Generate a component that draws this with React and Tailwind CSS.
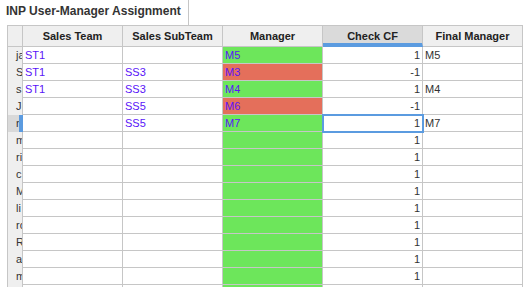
import React from 'react'

// Sheet rows: row-header label (clipped by the narrow frozen column), team, subteam, manager, ok flag, check value, final
const rows = [
  { label: 'ja', team: 'ST1', sub: '', mgr: 'M5', ok: true, check: '1', final: 'M5' },
  { label: 'S', team: 'ST1', sub: 'SS3', mgr: 'M3', ok: false, check: '-1', final: '' },
  { label: 's', team: 'ST1', sub: 'SS3', mgr: 'M4', ok: true, check: '1', final: 'M4' },
  { label: 'J', team: '', sub: 'SS5', mgr: 'M6', ok: false, check: '-1', final: '' },
  { label: 'n', team: '', sub: 'SS5', mgr: 'M7', ok: true, check: '1', final: 'M7', selected: true },
  { label: 'm', team: '', sub: '', mgr: '', ok: true, check: '1', final: '' },
  { label: 'ri', team: '', sub: '', mgr: '', ok: true, check: '1', final: '' },
  { label: 'c', team: '', sub: '', mgr: '', ok: true, check: '1', final: '' },
  { label: 'M', team: '', sub: '', mgr: '', ok: true, check: '1', final: '' },
  { label: 'li', team: '', sub: '', mgr: '', ok: true, check: '1', final: '' },
  { label: 'ro', team: '', sub: '', mgr: '', ok: true, check: '1', final: '' },
  { label: 'R', team: '', sub: '', mgr: '', ok: true, check: '1', final: '' },
  { label: 'a', team: '', sub: '', mgr: '', ok: true, check: '1', final: '' },
  { label: 'm', team: '', sub: '', mgr: '', ok: true, check: '1', final: '' },
  { label: '', team: '', sub: '', mgr: '', ok: true, check: '', final: '' },
]

const cell = 'w-[100px] h-[17px] shrink-0 border-r border-b border-[#c6c6c6] px-[2px] leading-[16px] overflow-hidden whitespace-nowrap'
const head = 'w-[100px] h-[21px] shrink-0 border-r border-[#c6c6c6] flex items-center justify-center font-bold text-[#222]'

export default function App() {
  return (
    <div className="w-[530px] h-[287px] overflow-hidden bg-white text-[11px] font-['Liberation_Sans',Arial,sans-serif]">
      {/* sheet tab title */}
      <div className="w-[189px] h-[25px] border-r border-[#c6c6c6] pl-[6px] pt-[3px] text-[12px] font-bold text-[#333] leading-[16px]">
        INP User-Manager Assignment
      </div>

      <div className="ml-[7px] w-[516px] border-l border-t border-[#c6c6c6]">
        {/* header row */}
        <div className="flex h-[21px] bg-[#efefef]">
          <div className="w-[15px] shrink-0 border-r border-b border-[#c6c6c6]" />
          <div className={`${head} border-b`}>Sales Team</div>
          <div className={`${head} border-b`}>Sales SubTeam</div>
          <div className={`${head} border-b`}>Manager</div>
          <div className={`${head} bg-[#dadada] border-b-4 border-b-[#5b9be0] pt-[3px]`}>Check CF</div>
          <div className={`${head} border-b`}>Final Manager</div>
        </div>

        {rows.map((r, i) => (
          <div key={i} className="flex">
            <div
              className={`w-[15px] h-[17px] shrink-0 pl-[8px] leading-[17px] overflow-hidden whitespace-nowrap text-[#333] ${
                r.selected ? 'bg-[#d9d9d9] border-r-4 border-[#5b9be0]' : 'bg-[#efefef] border-r border-[#c6c6c6]'
              }`}
            >
              {r.label}
            </div>
            <div className={`${cell} text-[#5a14f8]`}>{r.team}</div>
            <div className={`${cell} text-[#5a14f8]`}>{r.sub}</div>
            <div className={`${cell} text-[#5a14f8] ${r.ok ? 'bg-[#6de65b]' : 'bg-[#e46f5b]'}`}>{r.mgr}</div>
            <div
              className={`${cell} text-right text-[#333] ${
                r.selected ? 'relative z-10 outline-2 outline-[#5b9be0] -outline-offset-1' : ''
              }`}
            >
              {r.check}
            </div>
            <div className={`${cell} text-[#333]`}>{r.final}</div>
          </div>
        ))}
      </div>
    </div>
  )
}
